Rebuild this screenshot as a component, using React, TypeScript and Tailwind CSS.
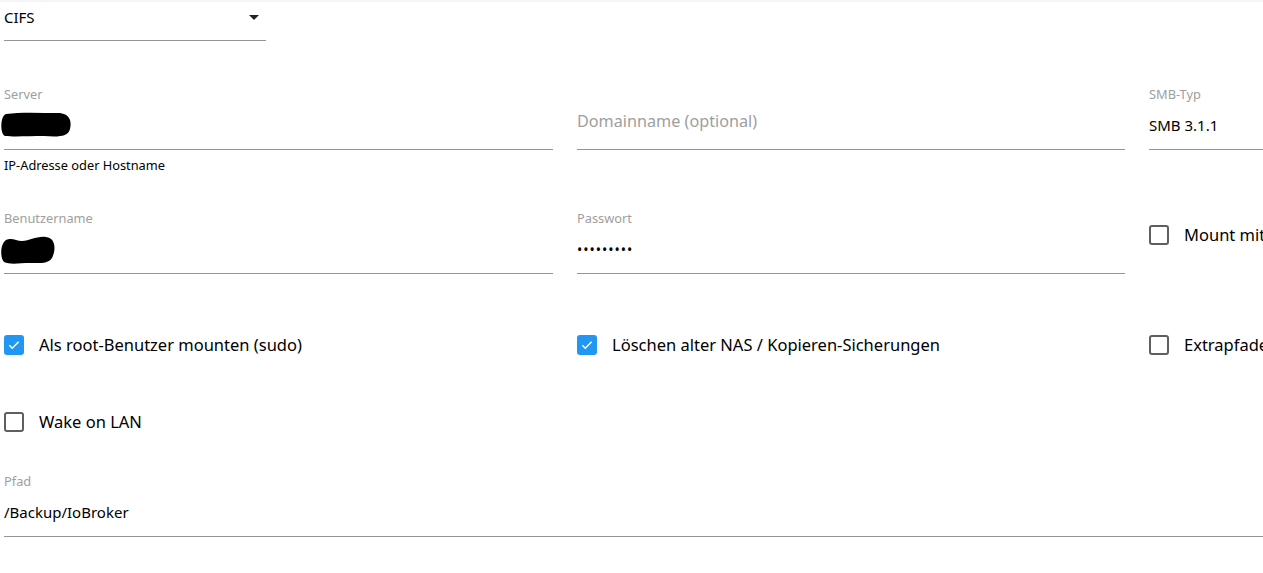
import React from "react";

const font = { fontFamily: '"Noto Sans", "Open Sans", Arial, sans-serif' };

function Checkbox({ checked }: { checked: boolean }) {
  if (checked) {
    return (
      <div className="w-[20px] h-[20px] rounded-[3px] bg-[#2196f3] flex items-center justify-center shrink-0">
        <svg width="14" height="14" viewBox="0 0 24 24">
          <path d="M4 12.5l5 5L20 6.5" fill="none" stroke="white" strokeWidth="2.6" />
        </svg>
      </div>
    );
  }
  return <div className="w-[20px] h-[20px] rounded-[3px] border-2 border-[#5f5f5f] shrink-0" />;
}

function CheckRow({ checked, label }: { checked: boolean; label: string }) {
  return (
    <div className="flex items-center h-[20px]">
      <Checkbox checked={checked} />
      <span className="ml-[15px] text-[16.5px] text-black whitespace-nowrap leading-[20px]">{label}</span>
    </div>
  );
}

function Field({
  label,
  children,
  helper,
}: {
  label?: string;
  children?: React.ReactNode;
  helper?: string;
}) {
  return (
    <div className="flex flex-col">
      <div className="h-[16px] text-[12.8px] leading-[16px] text-[#9e9e9e]">{label}</div>
      <div className="h-[48px] border-b border-[#949494] flex items-center">{children}</div>
      {helper && <div className="mt-[7px] text-[12.8px] leading-[16px] text-black">{helper}</div>}
    </div>
  );
}

export default function App() {
  return (
    <div
      className="w-[1263px] h-[573px] overflow-hidden bg-white border-t-2 border-[#f5f5f5] px-[4px]"
      style={font}
    >
      {/* Select */}
      <div className="w-[262px] h-[39px] border-b border-[#949494] flex items-start pt-[5px] relative">
        <span className="text-[15px] leading-[20px] text-black">CIFS</span>
        <svg className="absolute left-[245px] top-[13px]" width="10" height="5" viewBox="0 0 10 5">
          <path d="M0 0h10L5 5z" fill="#222" />
        </svg>
      </div>

      <div className="grid grid-cols-[549px_548px_549px] gap-x-[24px] mt-[45px]">
        {/* Row 1 */}
        <div className="h-[124px]">
          <Field label="Server" helper="IP-Adresse oder Hostname">
            <svg className="-ml-[4px] -mt-[1px]" width="72" height="26" viewBox="0 0 72 26">
              <path
                d="M6 2 C20 0 40 1 58 1 C70 1 72 10 70 17 C68 25 58 25 44 24 C30 24 14 25 5 24 C0 22 0 4 6 2 Z"
                fill="black"
              />
            </svg>
          </Field>
        </div>
        <div>
          <Field>
            <span className="text-[16.2px] text-[#9e9e9e] -mt-[8px]">Domainname (optional)</span>
          </Field>
        </div>
        <div>
          <Field label="SMB-Typ">
            <span className="text-[15px] text-black">SMB 3.1.1</span>
          </Field>
        </div>

        {/* Row 2 */}
        <div className="h-[125px]">
          <Field label="Benutzername">
            <svg className="-ml-[4px] mt-[2px]" width="56" height="30" viewBox="0 0 56 30">
              <path
                d="M6 4 C12 1 16 5 22 5 C30 5 36 0 46 1 C56 2 56 14 52 22 C48 28 40 27 30 27 C20 27 10 29 4 26 C0 22 0 8 6 4 Z"
                fill="black"
              />
            </svg>
          </Field>
        </div>
        <div>
          <Field label="Passwort">
            <span className="text-[14px] tracking-[1px] text-black">•••••••••</span>
          </Field>
        </div>
        <div className="pt-[15px]">
          <CheckRow checked={false} label="Mount mit" />
        </div>

        {/* Row 3 */}
        <div className="h-[77px]">
          <CheckRow checked={true} label="Als root-Benutzer mounten (sudo)" />
        </div>
        <div>
          <CheckRow checked={true} label="Löschen alter NAS / Kopieren-Sicherungen" />
        </div>
        <div>
          <CheckRow checked={false} label="Extrapfade" />
        </div>

        {/* Row 4 */}
        <div className="h-[61px] col-span-3">
          <CheckRow checked={false} label="Wake on LAN" />
        </div>
      </div>

      <div className="w-[1400px]">
        <Field label="Pfad">
          <span className="text-[15px] text-black">/Backup/IoBroker</span>
        </Field>
      </div>
    </div>
  );
}
